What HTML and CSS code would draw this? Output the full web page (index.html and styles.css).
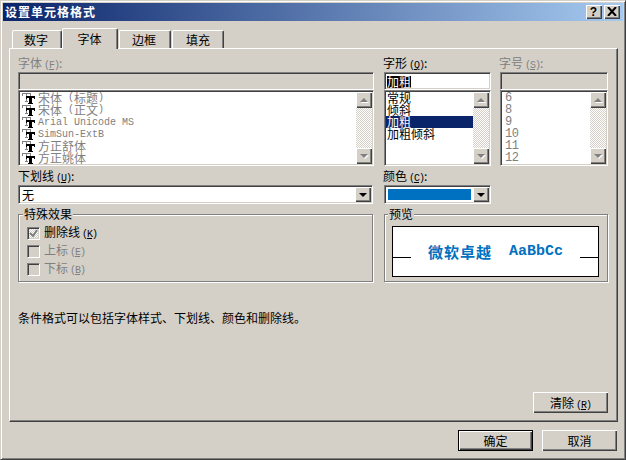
FILE: index.html
```html
<!DOCTYPE html>
<html lang="zh-CN">
<head>
  <meta charset="UTF-8">
  <title>设置单元格格式</title>
  <link rel="stylesheet" href="styles.css">
</head>
<body>
  <svg class="defs" width="0" height="0">
    <symbol id="tt" viewBox="0 0 14 12">
      <path fill="#808080" d="M0 1h9v3H8V2H5v7h1v1H3V9h1V2H1v2H0z"/>
      <path fill="#000" d="M4 4h9v3h-1V6h-2v5h1v1H6v-1h1V6H5v1H4z"/>
    </symbol>
  </svg>

  <div class="window">
    <div class="titlebar">
      <span class="title">设置单元格格式</span>
      <div class="title-buttons">
        <div class="title-btn raised">?</div>
        <div class="title-btn raised">
          <svg width="10" height="9" viewBox="0 0 10 9"><path stroke="#000" stroke-width="2" d="M1 0l8 9M9 0l-8 9"/></svg>
        </div>
      </div>
    </div>

    <div class="tabs">
      <div class="tab tab-num">数字</div>
      <div class="tab tab-font active">字体</div>
      <div class="tab tab-border">边框</div>
      <div class="tab tab-fill">填充</div>
    </div>

    <div class="panel">
      <div class="row">
        <div class="col-font">
          <div class="label disabled">字体<span class="key">(<u>F</u>)</span>:</div>
          <div class="field sunken"></div>
          <div class="list sunken">
            <div class="items disabled">
              <div class="item"><svg class="tt"><use href="#tt"/></svg>宋体<span class="en">&nbsp;(</span>标题<span class="en">)</span></div>
              <div class="item"><svg class="tt"><use href="#tt"/></svg>宋体<span class="en">&nbsp;(</span>正文<span class="en">)</span></div>
              <div class="item"><svg class="tt"><use href="#tt"/></svg><span class="en latin-name">Arial Unicode MS</span></div>
              <div class="item"><svg class="tt"><use href="#tt"/></svg><span class="en latin-name">SimSun-ExtB</span></div>
              <div class="item"><svg class="tt"><use href="#tt"/></svg>方正舒体</div>
              <div class="item"><svg class="tt"><use href="#tt"/></svg>方正姚体</div>
            </div>
            <div class="scrollbar">
              <div class="sb-btn raised"><i class="arrow-up"></i></div>
              <div class="sb-btn raised"><i class="arrow-down"></i></div>
            </div>
          </div>
        </div>

        <div class="col-style">
          <div class="label">字形<span class="key">(<u>Q</u>)</span>:</div>
          <div class="field sunken white"><span class="picked">加粗</span></div>
          <div class="list sunken">
            <div class="items">
              <div class="item text-item">常规</div>
              <div class="item text-item">倾斜</div>
              <div class="item text-item selected">加粗</div>
              <div class="item text-item">加粗倾斜</div>
            </div>
            <div class="scrollbar">
              <div class="sb-btn raised"><i class="arrow-up"></i></div>
              <div class="sb-btn raised"><i class="arrow-down"></i></div>
            </div>
          </div>
        </div>

        <div class="col-size">
          <div class="label disabled">字号<span class="key">(<u>S</u>)</span>:</div>
          <div class="field sunken"></div>
          <div class="list sunken">
            <div class="items disabled">
              <div class="item size-item">6</div>
              <div class="item size-item">8</div>
              <div class="item size-item">9</div>
              <div class="item size-item">10</div>
              <div class="item size-item">11</div>
              <div class="item size-item">12</div>
            </div>
            <div class="scrollbar">
              <div class="sb-btn raised"><i class="arrow-up"></i></div>
              <div class="sb-btn raised"><i class="arrow-down"></i></div>
            </div>
          </div>
        </div>
      </div>

      <div class="row row-combos">
        <div class="col-font">
          <div class="label">下划线<span class="key">(<u>U</u>)</span>:</div>
          <div class="combo sunken">
            <span class="combo-value">无</span>
            <div class="combo-btn raised"><i class="arrow-down black"></i></div>
          </div>
        </div>
        <div class="col-style">
          <div class="label">颜色<span class="key">(<u>C</u>)</span>:</div>
          <div class="combo sunken">
            <span class="swatch"></span>
            <div class="combo-btn raised"><i class="arrow-down black"></i></div>
          </div>
        </div>
      </div>

      <div class="row row-groups">
        <div class="group group-effects">
          <span class="legend">特殊效果</span>
          <div class="check">
            <span class="box mixed">
              <svg width="9" height="9" viewBox="0 0 9 9"><path fill="none" stroke="#808080" stroke-width="2" d="M1 4l3 3 4-6"/></svg>
            </span>
            <span>删除线<span class="key">(<u>K</u>)</span></span>
          </div>
          <div class="check disabled">
            <span class="box"></span>
            <span>上标<span class="key">(<u>E</u>)</span></span>
          </div>
          <div class="check disabled">
            <span class="box"></span>
            <span>下标<span class="key">(<u>B</u>)</span></span>
          </div>
        </div>
        <div class="group group-preview">
          <span class="legend">预览</span>
          <div class="preview">
            <span class="rule"></span>
            <span class="sample">微软卓越</span>
            <span class="sample-en">AaBbCc</span>
            <span class="rule"></span>
          </div>
        </div>
      </div>

      <div class="note">条件格式可以包括字体样式、下划线、颜色和删除线。</div>

      <div class="clear-row">
        <div class="btn raised">清除<span class="key">(<u>R</u>)</span></div>
      </div>
    </div>

    <div class="footer">
      <div class="btn raised default">确定</div>
      <div class="btn raised">取消</div>
    </div>
  </div>
</body>
</html>
```

FILE: styles.css
```css
body {
  margin: 0;
  background-color: #d4d0c8;
  font-family: "Noto Sans CJK SC", "Liberation Sans", sans-serif;
  font-size: 12px;
  line-height: 14px;
  color: #000;
}
.defs {
  display: block;
  height: 0;
}
.window {
  width: 626px;
  height: 460px;
  box-sizing: border-box;
  padding: 2px;
  border: 1px solid;
  border-color: #d4d0c8 #404040 #404040 #d4d0c8;
  box-shadow: inset 1px 1px 0 #fff, inset -1px -1px 0 #808080;
  background-color: #d4d0c8;
  overflow: hidden;
}

/* shared bevels */
.raised {
  box-sizing: border-box;
  background-color: #d4d0c8;
  box-shadow: inset 1px 1px 0 #fff, inset -1px -1px 0 #404040, inset -2px -2px 0 #808080;
}
.sunken {
  box-sizing: border-box;
  border: 1px solid;
  border-color: #808080 #fff #fff #808080;
  box-shadow: inset 1px 1px 0 #404040, inset -1px -1px 0 #d4d0c8;
}
.disabled {
  color: #808080;
}
.en {
  font-family: "Liberation Mono", monospace;
  font-size: 10px;
}
.latin-name {
  margin-top: 2px;
}
.key {
  margin-left: 2px;
  font-family: "Liberation Mono", monospace;
  font-size: 10px;
  letter-spacing: -1px;
}

/* title bar */
.titlebar {
  height: 18px;
  display: flex;
  align-items: center;
  justify-content: space-between;
  padding: 0 3px 0 2px;
  background: linear-gradient(to right, #0a246a, #a6caf0);
}
.title {
  color: #fff;
  font-weight: bold;
  letter-spacing: 1px;
}
.title-buttons {
  display: flex;
  gap: 2px;
}
.title-btn {
  width: 16px;
  height: 14px;
  display: flex;
  align-items: center;
  justify-content: center;
  font-family: "Liberation Sans", sans-serif;
  font-weight: bold;
  font-size: 12px;
  padding: 0 1px 1px 0;
}

/* tabs */
.tabs {
  height: 20px;
  margin: 7px 0 0 6px;
  padding-left: 3px;
  display: flex;
  align-items: flex-end;
}
.tab {
  box-sizing: border-box;
  height: 18px;
  text-align: center;
  line-height: 18px;
  border-top: 1px solid #fff;
  border-left: 1px solid #fff;
  border-right: 1px solid #404040;
  border-radius: 2px 2px 0 0;
  box-shadow: inset -1px 0 0 #808080;
}
.tab-num { width: 50px; padding-right: 2px; }
.tab-font { width: 56px; padding-right: 1px; }
.tab-border { width: 52px; margin-left: 1px; padding-right: 2px; }
.tab-fill { width: 52px; margin-left: 1px; }
.tab.active {
  height: 21px;
  margin-bottom: -1px;
  line-height: 19px;
  position: relative;
  background-color: #d4d0c8;
}

/* tab page */
.panel {
  width: 609px;
  height: 374px;
  box-sizing: border-box;
  margin-left: 6px;
  padding: 5px 9px 0 8px;
  border: 1px solid;
  border-color: #fff #404040 #404040 #fff;
  box-shadow: inset -1px -1px 0 #808080;
}
.row {
  display: flex;
}
.col-font {
  width: 356px;
  margin-right: 10px;
}
.col-style {
  width: 107px;
  margin-right: 9px;
}
.col-size {
  width: 108px;
}
.label {
  height: 18px;
  line-height: 18px;
  margin-left: -1px;
}
.col-font > .label {
  margin-left: 0;
}
.field {
  height: 18px;
  padding: 1px 2px;
}
.white {
  background-color: #fff;
}
.picked {
  display: inline-block;
  height: 12px;
  line-height: 12px;
  margin: 2px 0 0 0;
  background-color: #000;
  color: #fff;
}

/* list boxes */
.list {
  height: 76px;
  padding: 1px;
  display: flex;
  background-color: #fff;
}
.items {
  flex: 1;
  overflow: hidden;
}
.item {
  height: 12px;
  line-height: 12px;
  display: flex;
  align-items: center;
  white-space: nowrap;
}
.tt {
  width: 14px;
  height: 12px;
  margin: 0 2px 0 2px;
  flex-shrink: 0;
}
.text-item {
  padding-left: 1px;
}
.size-item {
  padding-left: 3px;
  font-family: "Liberation Mono", monospace;
  font-size: 12px;
  letter-spacing: -0.5px;
}
.selected {
  background-color: #0a246a;
  color: #fff;
}
.scrollbar {
  width: 16px;
  display: flex;
  flex-direction: column;
  justify-content: space-between;
  background: repeating-conic-gradient(#fff 0 25%, #d4d0c8 0 50%) 0 0 / 2px 2px;
}
.sb-btn {
  height: 16px;
  display: flex;
  align-items: center;
  justify-content: center;
}
.arrow-up, .arrow-down {
  display: block;
  width: 0;
  height: 0;
  border-left: 4px solid transparent;
  border-right: 4px solid transparent;
  filter: drop-shadow(1px 1px 0 #fff);
}
.arrow-up {
  border-bottom: 4px solid #808080;
}
.arrow-down {
  border-top: 4px solid #808080;
}
.arrow-down.black {
  border-top-color: #000;
  filter: none;
}

/* combos */
.row-combos {
  margin-top: 1px;
}
.combo {
  height: 19px;
  padding: 1px;
  display: flex;
  align-items: center;
  background-color: #fff;
}
.col-font > .combo {
  width: 355px;
}
.combo-value {
  flex: 1;
  padding-left: 2px;
}
.swatch {
  flex: 1;
  height: 11px;
  margin: 0 2px 0 2px;
  background-color: #0070c0;
}
.combo-btn {
  width: 16px;
  height: 15px;
  display: flex;
  align-items: center;
  justify-content: center;
}

/* group boxes */
.row-groups {
  margin-top: 10px;
}
.group {
  position: relative;
  height: 68px;
  box-sizing: border-box;
  border: 1px solid #808080;
  box-shadow: 1px 1px 0 #fff, inset 1px 1px 0 #fff;
}
.group-effects {
  width: 355px;
  margin-right: 11px;
  padding: 12px 0 0 8px;
  display: flex;
  flex-direction: column;
  gap: 5px;
}
.group-effects .legend {
  left: 4px;
}
.group-preview {
  width: 224px;
  padding: 11px 0 0 7px;
}
.legend {
  position: absolute;
  top: -8px;
  left: 3px;
  padding: 0 1px;
  background-color: #d4d0c8;
}
.check {
  display: flex;
  align-items: center;
  gap: 4px;
  height: 13px;
}
.box {
  width: 13px;
  height: 13px;
  box-sizing: border-box;
  display: flex;
  align-items: center;
  justify-content: center;
  border: 1px solid;
  border-color: #808080 #fff #fff #808080;
  box-shadow: inset 1px 1px 0 #404040, inset -1px -1px 0 #d4d0c8;
}
.box.mixed {
  background: repeating-conic-gradient(#fff 0 25%, #d4d0c8 0 50%) 0 0 / 2px 2px;
}

/* preview */
.preview {
  width: 207px;
  height: 51px;
  box-sizing: border-box;
  display: flex;
  align-items: center;
  border: 1px solid #000;
  background-color: #fff;
  color: #0070c0;
  font-weight: bold;
}
.rule {
  width: 18px;
  height: 1px;
  margin-top: 12px;
  background-color: #000;
}
.sample {
  margin-left: 17px;
  font-size: 15px;
  letter-spacing: 1px;
}
.sample-en {
  margin: 0 auto 0 17px;
  font-family: "Liberation Mono", monospace;
  font-size: 15px;
}

/* bottom */
.note {
  margin-top: 29px;
}
.clear-row {
  margin-top: 67px;
  display: flex;
  justify-content: flex-end;
}
.btn {
  width: 75px;
  height: 21px;
  line-height: 21px;
  text-align: center;
}
.footer {
  margin-top: 8px;
  padding-right: 6px;
  display: flex;
  justify-content: flex-end;
  gap: 9px;
}
.btn.default {
  outline: 1px solid #000;
  outline-offset: -1px;
  box-shadow: inset 2px 2px 0 #fff, inset -2px -2px 0 #404040, inset -3px -3px 0 #808080;
}
```
